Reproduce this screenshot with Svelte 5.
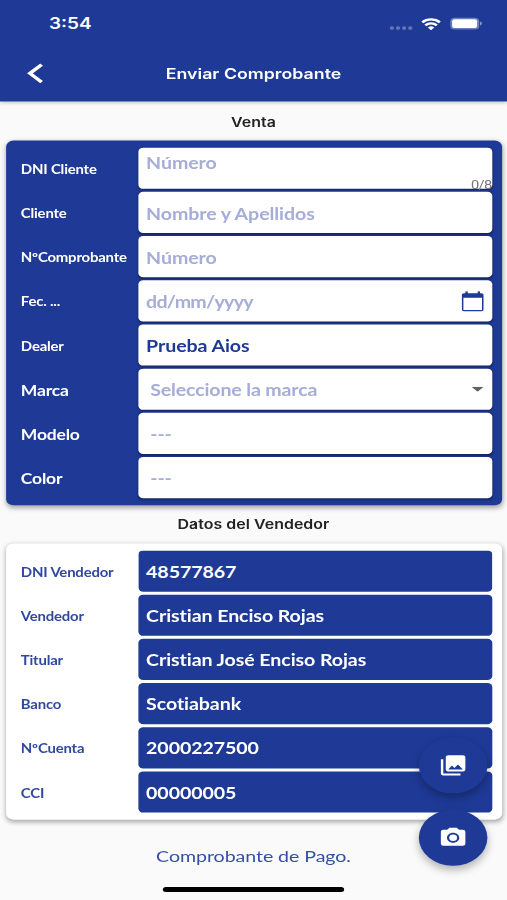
<script lang="ts">
  type Field = {
    label: string;
    value: string;
    kind?: 'hint' | 'date' | 'value' | 'select';
    big?: boolean;
    counter?: string;
    icon?: 'calendar' | 'caret';
  };

  const sale: Field[] = [
    { label: 'DNI Cliente', value: 'Número', kind: 'hint', counter: '0/8' },
    { label: 'Cliente', value: 'Nombre y Apellidos', kind: 'hint' },
    { label: 'NºComprobante', value: 'Número', kind: 'hint' },
    { label: 'Fec. ...', value: 'dd/mm/yyyy', kind: 'date', icon: 'calendar' },
    { label: 'Dealer', value: 'Prueba Aios', kind: 'value' },
    { label: 'Marca', value: 'Seleccione la marca', kind: 'select', big: true, icon: 'caret' },
    { label: 'Modelo', value: '---', kind: 'select', big: true },
    { label: 'Color', value: '---', kind: 'select', big: true },
  ];

  const seller: Field[] = [
    { label: 'DNI Vendedor', value: '48577867' },
    { label: 'Vendedor', value: 'Cristian Enciso Rojas' },
    { label: 'Titular', value: 'Cristian José Enciso Rojas' },
    { label: 'Banco', value: 'Scotiabank' },
    { label: 'NºCuenta', value: '2000227500' },
    { label: 'CCI', value: '00000005' },
  ];
</script>

<div class="viewport">
  <div class="screen">
    <header>
      <div class="status">
        <span class="time">3:54</span>
        <div class="status-icons">
          <svg class="dots" width="20" height="4" viewBox="0 0 20 4">
            <circle cx="2" cy="2" r="1.8" /><circle cx="7" cy="2" r="1.8" />
            <circle cx="12" cy="2" r="1.8" /><circle cx="17" cy="2" r="1.8" />
          </svg>
          <svg class="wifi" width="16" height="12" viewBox="0 0 16 12" fill="none" stroke="#fff" stroke-width="2.3">
            <path d="M.8 4.2a10.3 10.3 0 0 1 14.4 0M3.3 7.2a6.7 6.7 0 0 1 9.4 0" />
            <path d="M8 12 5.4 9.4a3.7 3.7 0 0 1 5.2 0z" fill="#fff" stroke="none" />
          </svg>
          <svg class="battery" width="27" height="13" viewBox="0 0 27 13">
            <rect x=".7" y=".7" width="23.6" height="11.6" rx="3.5" fill="#fff" fill-opacity=".35" />
            <rect x="2.2" y="2.2" width="20.4" height="8.6" rx="2" fill="#fff" />
            <path d="M25 4.5q1.5.6 1.5 2t-1.5 2z" fill="#fff" fill-opacity=".5" />
          </svg>
        </div>
      </div>
      <div class="bar">
        <button class="back" aria-label="Atrás">
          <svg width="14" height="20" viewBox="0 0 14 20" fill="none" stroke="#fff" stroke-width="3.2">
            <path d="M12 1.3 2.5 10l9.5 8.7" />
          </svg>
        </button>
        <h1>Enviar Comprobante</h1>
      </div>
    </header>

    <h2 class="first">Venta</h2>
    <section class="card sale">
      {#each sale as f}
        <div class="row">
          <span class="label" class:big={f.big}>{f.label}</span>
          <div class="field {f.kind}" class:counted={f.counter}>
            <span class="text">{f.value}</span>
            {#if f.counter}<span class="counter">{f.counter}</span>{/if}
            {#if f.icon === 'calendar'}
              <svg class="calendar" width="18" height="20" viewBox="0 0 18 20">
                <path fill="#1e3a96" d="M16 2h-1V0h-2v2H5V0H3v2H2C.9 2 0 2.9 0 4v14c0 1.1.9 2 2 2h14c1.1 0 2-.9 2-2V4c0-1.1-.9-2-2-2zm.6 16.6H1.4V6.5h15.2z" />
              </svg>
            {:else if f.icon === 'caret'}
              <svg class="caret" width="10" height="5" viewBox="0 0 10 5"><path fill="#616161" d="M0 0h10L5 5z" /></svg>
            {/if}
          </div>
        </div>
      {/each}
    </section>

    <h2>Datos del Vendedor</h2>
    <section class="card seller">
      {#each seller as f}
        <div class="row">
          <span class="label">{f.label}</span>
          <div class="field"><span class="text">{f.value}</span></div>
        </div>
      {/each}
    </section>

    <p class="receipt">Comprobante de Pago.</p>
    <div class="home"></div>

    <div class="fabs">
      <button class="fab" aria-label="Galería">
        <svg width="24" height="24" viewBox="0 0 24 24" fill="#fff">
          <path d="M22 16V4c0-1.1-.9-2-2-2H8c-1.1 0-2 .9-2 2v12c0 1.1.9 2 2 2h12c1.1 0 2-.9 2-2zm-11-4 2.03 2.71L16 11l4 5H8l3-4zM2 6v14c0 1.1.9 2 2 2h14v-2H4V6H2z" />
        </svg>
      </button>
      <button class="fab" aria-label="Cámara">
        <svg width="24" height="24" viewBox="0 0 24 24" fill="#fff">
          <path fill-rule="evenodd" d="M9 2 7.17 4H4c-1.1 0-2 .9-2 2v12c0 1.1.9 2 2 2h16c1.1 0 2-.9 2-2V6c0-1.1-.9-2-2-2h-3.17L15 2H9zm3 15c-2.76 0-5-2.24-5-5s2.24-5 5-5 5 2.24 5 5-2.24 5-5 5z" />
          <circle cx="12" cy="12" r="3.2" />
        </svg>
      </button>
    </div>
  </div>
</div>

<style>
  :global(body) { margin: 0; background: #fafafa; }
  .viewport { width: 507px; height: 900px; overflow: hidden; }
  /* 414x896 layout stretched over the whole viewport */
  .screen {
    position: relative;
    width: 414px;
    height: 896px;
    box-sizing: border-box;
    display: flex;
    flex-direction: column;
    background: #fafafa;
    font-family: Lato, 'Liberation Sans', sans-serif;
    font-variant-ligatures: none;
    transform: scale(1.22464, 1.00446);
    transform-origin: 0 0;
  }
  button { border: 0; padding: 0; background: none; }
  svg { display: block; }

  header {
    flex: none;
    height: 100.5px;
    background: #1e3a96;
    color: #fff;
    box-shadow: 0 1px 4px rgba(0, 0, 0, 0.3);
  }
  .status {
    display: flex;
    justify-content: space-between;
    align-items: center;
    height: 44px;
    padding: 3px 20px 0 40px;
    box-sizing: border-box;
  }
  .time { font: 600 15.5px Inter, sans-serif; }
  .status-icons { display: flex; align-items: center; }
  .dots { fill: #fff; opacity: 0.3; margin: 8px 6px 0 0; }
  .wifi { margin-right: 7px; }
  .bar {
    display: grid;
    grid-template-columns: 60px 1fr 60px;
    align-items: center;
    height: 57px;
  }
  .back { justify-self: start; margin-left: 22px; }
  h1 {
    margin: 0;
    padding-top: 1px;
    text-align: center;
    font: 600 14.5px Inter, sans-serif;
    white-space: nowrap;
  }
  h2 {
    flex: none;
    margin: 0;
    height: 37.6px;
    line-height: 38.5px;
    text-align: center;
    color: #222;
    font-family: Inter, sans-serif;
    font-size: 13px;
    font-weight: 600;
    letter-spacing: 0.03px;
  }
  h2.first { height: 39.3px; line-height: 40px; }

  .card {
    flex: none;
    margin: 0 4px 0 5px;
    padding: 5.9px 8px 5.5px 12px;
    border-radius: 6px;
    box-shadow: 0 2px 5px rgba(0, 0, 0, 0.35);
  }
  .sale { background: #1e3a96; color: #fff; }
  .seller { background: #fff; color: #1e3a96; }
  .row {
    display: grid;
    grid-template-columns: 96px 1fr;
    align-items: center;
    height: 44px;
  }
  .label {
    padding-top: 1.6px;
    font-size: 12.2px;
    font-weight: 700;
    letter-spacing: -0.16px;
    white-space: nowrap;
  }
  .label.big { padding-top: 1.2px; font-size: 14.3px; }
  .seller .label { padding-top: 1px; color: #3049a0; }
  .field {
    position: relative;
    display: flex;
    align-items: center;
    justify-content: space-between;
    height: 40.5px;
    padding: 0 7px 0 6.3px;
    box-sizing: border-box;
    border-radius: 4px;
    background: #fff;
    color: #1e3a96;
    font-size: 16px;
    font-weight: 700;
    letter-spacing: -0.07px;
    white-space: nowrap;
  }
  .sale .field { box-shadow: 0 1px 2px rgba(0, 0, 0, 0.35); }
  .seller .field { background: #1e3a96; color: #fff; }
  .field.hint, .field.date, .field.select { color: #a6add6; }
  .field.hint, .field.date { padding-top: 1px; }
  .field.date { letter-spacing: -0.6px; }
  .field.select { padding-left: 9.7px; letter-spacing: -0.13px; }
  .field.counted { align-items: flex-start; padding-top: 5px; }
  .counter {
    position: absolute;
    right: 0.5px;
    bottom: -3px;
    color: #777;
    font: 400 12px Roboto, sans-serif;
    letter-spacing: -0.5px;
  }

  .receipt {
    margin: 24.6px 0 0;
    text-align: center;
    color: #3450a0;
    font-size: 16px;
    line-height: 22px;
    letter-spacing: -0.05px;
  }
  .home {
    width: 148px;
    height: 5px;
    margin: 20.4px auto 0;
    border-radius: 3px;
    background: #000;
  }
  .fabs {
    position: absolute;
    right: 16px;
    bottom: 34px;
    display: flex;
    flex-direction: column;
    gap: 16px;
  }
  .fab {
    display: flex;
    align-items: center;
    justify-content: center;
    width: 56px;
    height: 56px;
    border-radius: 50%;
    background: #1e3a96;
    box-shadow: 0 4px 8px rgba(0, 0, 0, 0.3);
  }
</style>
